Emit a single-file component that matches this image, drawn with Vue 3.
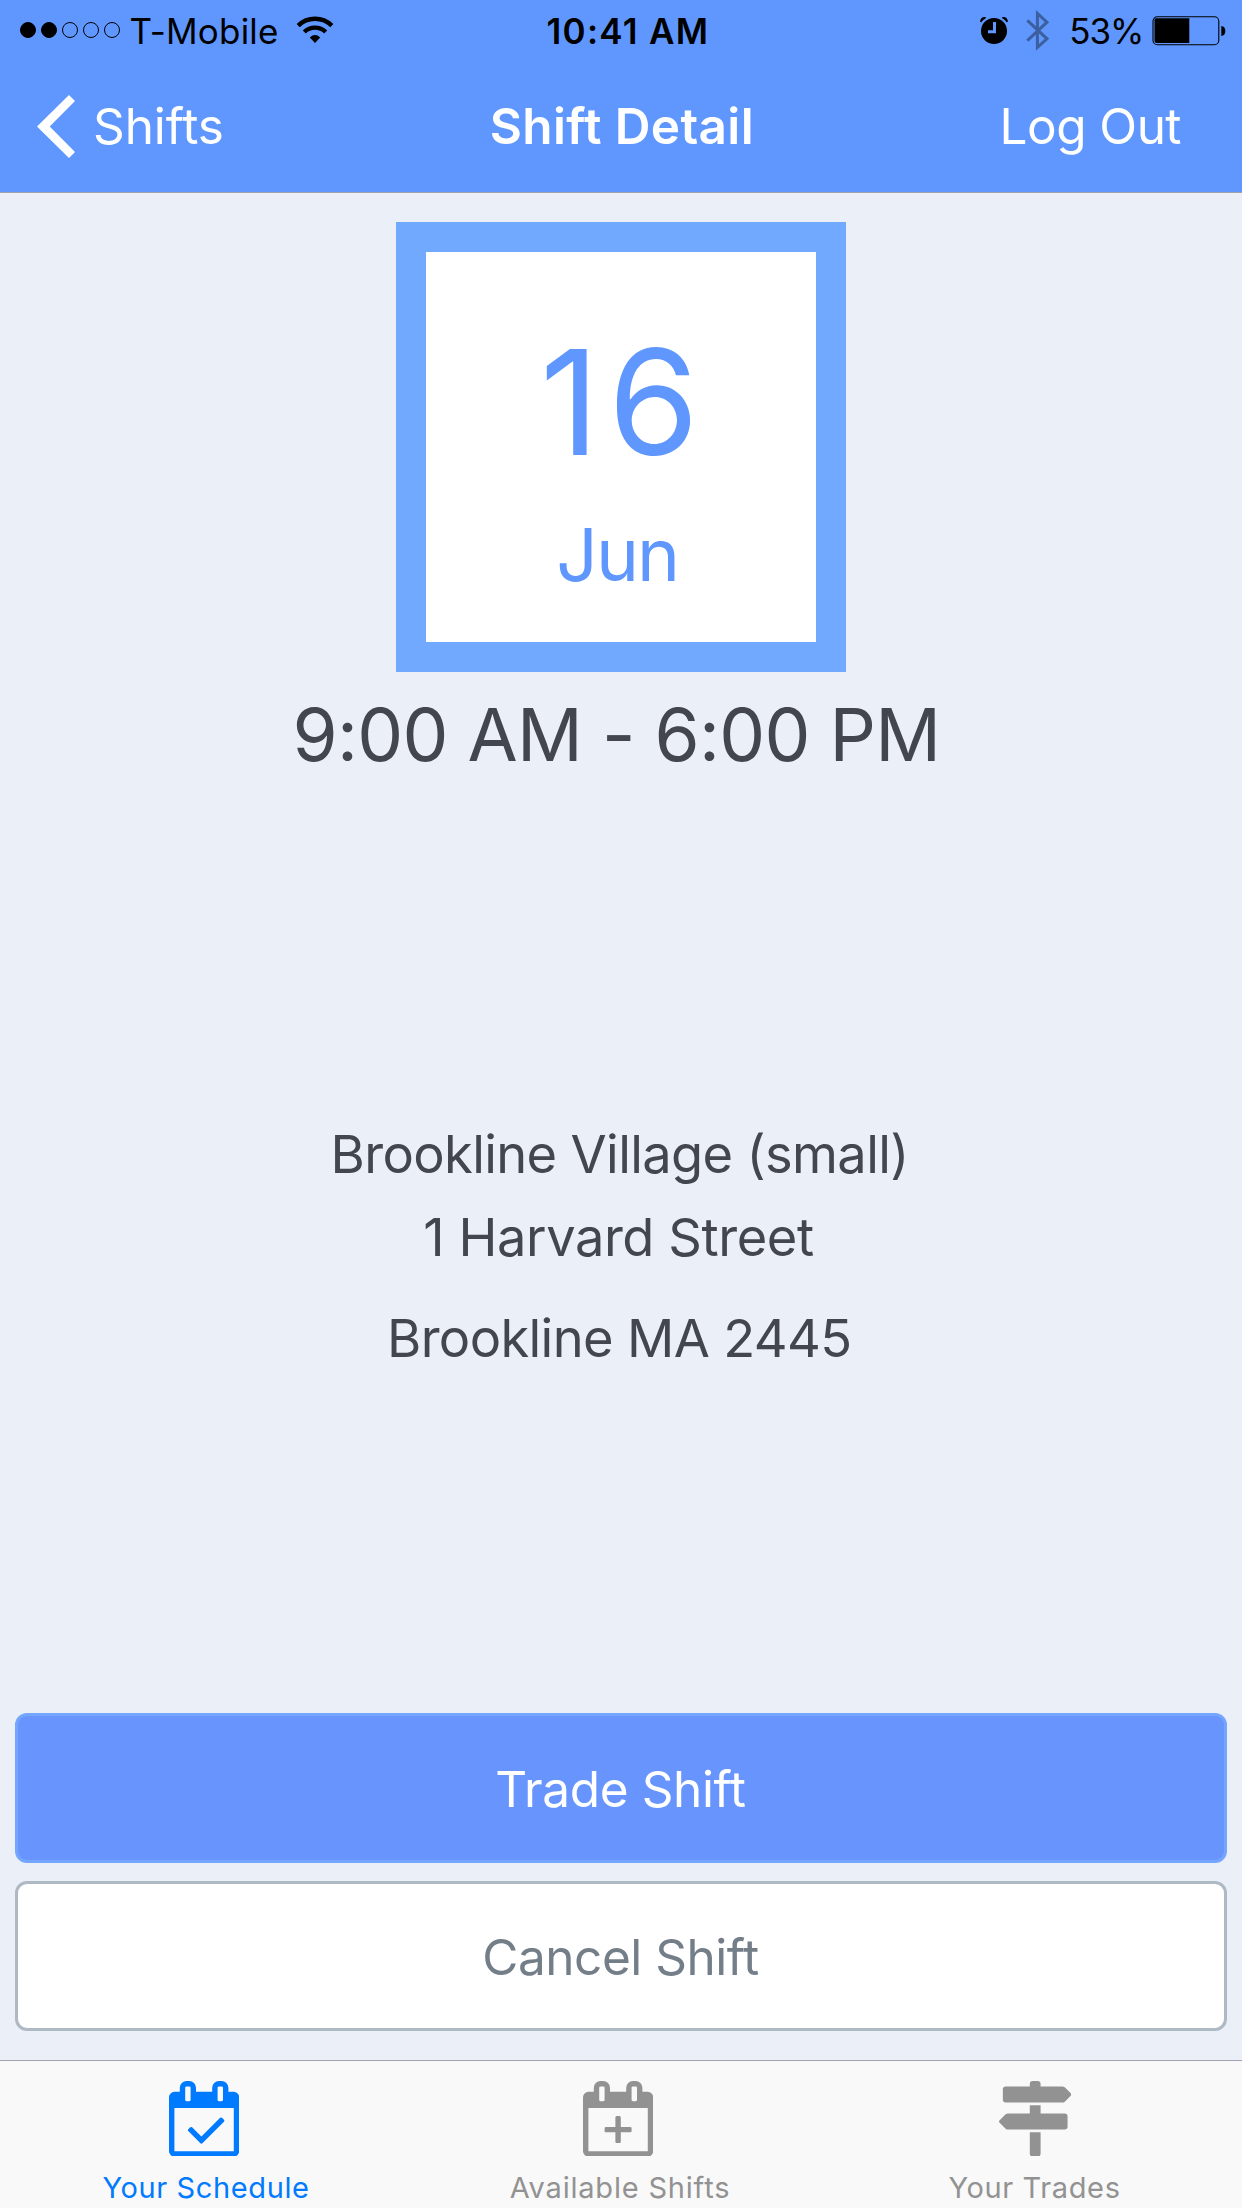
<script setup>
const signal = [true, true, false, false, false]
const calendar =
  'M128 1664h1408v-1024h-1408v1024zM512 448v-288q0-14-9-23t-23-9h-64q-14 0-23 9t-9 23v288q0 14 9 23t23 9h64q14 0 23-9t9-23zM1280 448v-288q0-14-9-23t-23-9h-64q-14 0-23 9t-9 23v288q0 14 9 23t23 9h64q14 0 23-9t9-23zM1664 384v1280q0 52-38 90t-90 38h-1408q-52 0-90-38t-38-90v-1280q0-52 38-90t90-38h128v-96q0-66 47-113t113-47h64q66 0 113 47t47 113v96h384v-96q0-66 47-113t113-47h64q66 0 113 47t47 113v96h128q52 0 90 38t38 90z'
const tabs = [
  {
    name: 'schedule',
    label: 'Your Schedule',
    active: true,
    box: '0 0 1664 1792',
    path: calendar + 'M1303 964l-512 512q-10 9-23 9t-23-9l-288-288q-9-10-9-23t9-22l46-46q9-9 22-9t23 9l220 220 444-444q10-9 23-9t22 9l46 46q9 9 9 22t-9 23z',
  },
  {
    name: 'available',
    label: 'Available Shifts',
    active: false,
    box: '0 0 1664 1792',
    path: calendar + 'M896 1088h224q14 0 23 9t9 23v64q0 14-9 23t-23 9h-224v224q0 14-9 23t-23 9h-64q-14 0-23-9t-9-23v-224h-224q-14 0-23-9t-9-23v-64q0-14 9-23t23-9h224v-224q0-14 9-23t23-9h64q14 0 23 9t9 23z',
  },
  {
    name: 'trades',
    label: 'Your Trades',
    active: false,
    box: '37 0 1718 1792',
    path: 'M1745 297q10 10 10 23t-10 23l-141 141q-28 28-68 28h-1344q-26 0-45-19t-19-45v-256q0-26 19-45t45-19h576v-64q0-26 19-45t45-19h128q26 0 45 19t19 45v64h512q40 0 68 28zM768 576h256v192h576q26 0 45 19t19 45v256q0 26-19 45t-45 19h-1344q-40 0-68-28l-141-141q-10-10-10-23t10-23l141-141q28-28 68-28h512zM768 1216h256v512q0 26-19 45t-45 19h-128q-26 0-45-19t-19-45z',
  },
]
</script>

<template>
  <div class="screen">
    <header class="header">
      <div class="status">
        <div class="status-left">
          <div class="dots">
            <i v-for="(on, n) in signal" :key="n" class="dot" :class="{ on }"></i>
          </div>
          <span class="carrier">T-Mobile</span>
          <svg class="wifi" viewBox="0 0 38 28">
            <path d="M2.2 9.6A24 24 0 0 1 35.8 9.6" fill="none" stroke="#000" stroke-width="4.4" />
            <path d="M8.3 16A15.3 15.3 0 0 1 29.7 16" fill="none" stroke="#000" stroke-width="4.4" />
            <path d="M19 27L13.8 21.4Q19 16.6 24.2 21.4Z" />
          </svg>
        </div>
        <span class="clock">10:41 AM</span>
        <div class="status-right">
          <svg class="alarm" viewBox="0 0 28 28">
            <circle cx="14" cy="15" r="13" />
            <path d="M0 5.2Q1 0.2 5.8 1L5.6 2.4Q3 3.6 1.2 6.4ZM28 5.2Q27 0.2 22.2 1L22.4 2.4Q25 3.6 26.8 6.4Z" />
            <path d="M14.5 6V15.8H8" fill="none" stroke="#5f97ff" stroke-width="3" />
          </svg>
          <svg class="bluetooth" viewBox="0 0 24 42">
            <path d="M1.3 10.3L21 28.8L11.4 37.4V3.4L21 12.2L1.3 30.7" fill="none" stroke="#3c609f" stroke-width="3" />
          </svg>
          <span class="percent">53%</span>
          <svg class="battery" viewBox="0 0 74 30">
            <rect x="1" y="0.7" width="65.8" height="28" rx="4.5" fill="none" stroke="#000" stroke-width="1.1" />
            <path d="M4.5 2.3H37.3V27H4.5Q2.5 27 2.5 25V4.3Q2.5 2.3 4.5 2.3Z" />
            <path d="M69.3 10Q73.3 10.5 73.3 15T69.3 20Z" />
          </svg>
        </div>
      </div>
      <nav class="nav">
        <a class="back">
          <svg class="chevron" viewBox="0 0 38 63"><path d="M32 0L38 6L12.7 31.5L38 57L32 63L0 31.5Z" fill="#fff" /></svg>
          <span>Shifts</span>
        </a>
        <h1 class="title">Shift Detail</h1>
        <a class="logout">Log Out</a>
      </nav>
    </header>

    <main class="content">
      <section class="date">
        <span class="day">16</span>
        <span class="month">Jun</span>
      </section>
      <p class="time">9:00 AM - 6:00 PM</p>
      <address class="address">
        <span class="place">Brookline Village (small)</span>
        <span class="street">1 Harvard Street</span>
        <span class="city">Brookline MA 2445</span>
      </address>
      <div class="actions">
        <button class="button primary">Trade Shift</button>
        <button class="button secondary">Cancel Shift</button>
      </div>
    </main>

    <footer class="tabs">
      <a v-for="tab in tabs" :key="tab.name" class="tab" :class="[tab.name, { active: tab.active }]">
        <svg class="tab-icon" :viewBox="tab.box"><path :d="tab.path" fill="currentColor" fill-rule="evenodd" /></svg>
        <span class="tab-label">{{ tab.label }}</span>
      </a>
    </footer>
  </div>
</template>

<style>
body {
  margin: 0;
}
</style>

<style scoped>
.screen {
  display: flex;
  flex-direction: column;
  width: 1242px;
  height: 2208px;
  overflow: hidden;
  background: #eaeff8;
  color: #43464e;
  font-family: Inter, "Liberation Sans", sans-serif;
  white-space: nowrap;
}
.header {
  box-sizing: border-box;
  height: 193px;
  flex: none;
  background: #5f97ff;
  border-bottom: 1px solid #a0a2ad;
}
.status,
.nav {
  display: grid;
  grid-template-columns: 1fr auto 1fr;
}
.status {
  height: 62px;
  line-height: 62px;
  font-size: 35px;
  color: #000;
}
.status-left,
.status-right {
  display: flex;
  align-items: flex-start;
}
.status-left {
  padding-left: 20px;
}
.status-right {
  justify-content: flex-end;
  padding-right: 16px;
}
.dots {
  display: flex;
  gap: 5px;
  margin-top: 22px;
}
.dot {
  box-sizing: border-box;
  width: 16px;
  height: 16px;
  border: 1px solid #000;
  border-radius: 50%;
}
.dot.on {
  background: #000;
}
.carrier {
  margin-left: 9.5px;
  letter-spacing: 0.2px;
}
.wifi {
  width: 38px;
  height: 28px;
  margin: 15.5px 0 0 17.8px;
}
.clock {
  padding-left: 13.7px;
  font-weight: 600;
  letter-spacing: 1.27px;
}
.alarm {
  width: 28px;
  height: 28px;
  margin: 16px 18px 0 0;
}
.bluetooth {
  width: 24px;
  height: 42px;
  margin: 10px 19.3px 0 0;
}
.percent {
  letter-spacing: -1.1px;
}
.battery {
  width: 74px;
  height: 30px;
  margin: 16px 0 0 8.7px;
}
.nav {
  height: 130px;
  line-height: 128px;
  font-size: 49.5px;
  color: #fff;
}
.back {
  display: flex;
  padding-left: 37px;
  letter-spacing: -0.1px;
}
.chevron {
  width: 38px;
  height: 63px;
  margin: 33px 18px 0 0;
}
.title {
  margin: 0;
  padding-left: 1.7px;
  font-size: inherit;
  font-weight: 600;
  letter-spacing: 0.37px;
}
.logout {
  justify-self: end;
  padding-right: 61px;
  letter-spacing: -0.55px;
}
.content {
  display: flex;
  flex: 1;
  flex-direction: column;
  align-items: center;
  padding-top: 29px;
}
.date {
  box-sizing: border-box;
  display: flex;
  flex: none;
  flex-direction: column;
  align-items: center;
  width: 450px;
  height: 450px;
  padding-top: 75px;
  border: 30px solid #71a9ff;
  background: #fff;
  color: #5f97ff;
}
.day {
  padding-left: 5.7px;
  font-size: 146px;
  line-height: 150px;
  letter-spacing: 9px;
}
.month {
  margin-top: 38px;
  padding-right: 7.6px;
  font-size: 72.8px;
  line-height: 80px;
  letter-spacing: -1.95px;
}
.time {
  margin: 18px 0 0;
  padding-right: 9.1px;
  font-size: 72.8px;
  line-height: 90px;
  letter-spacing: -0.69px;
}
.address {
  display: flex;
  flex-direction: column;
  align-items: center;
  margin-top: 342px;
  font-size: 52.4px;
  font-style: normal;
  line-height: 64px;
}
.place {
  padding-right: 2.7px;
  letter-spacing: -0.63px;
}
.street {
  margin-top: 19px;
  padding-right: 5px;
  letter-spacing: -0.42px;
}
.city {
  margin-top: 37px;
  padding-right: 3.5px;
  letter-spacing: -0.63px;
}
.actions {
  display: flex;
  flex-direction: column;
  gap: 18px;
  align-self: stretch;
  margin-top: auto;
  padding: 0 15px 29px;
}
.button {
  box-sizing: border-box;
  height: 150px;
  padding: 2px 0 0;
  border: 3px solid;
  border-radius: 12px;
  font: 49.5px / 142px Inter, "Liberation Sans", sans-serif;
}
.primary {
  padding-right: 1px;
  border-color: #74a5ff;
  background: #6895fd;
  color: #fff;
  letter-spacing: -0.38px;
}
.secondary {
  padding-right: 1px;
  border-color: #aeb9c4;
  background: #fff;
  color: #747e88;
  letter-spacing: -0.48px;
}
.tabs {
  box-sizing: border-box;
  display: grid;
  flex: none;
  grid-template-columns: repeat(3, 1fr);
  height: 148px;
  border-top: 1px solid #a0a2ad;
  background: #f9f9f9;
  color: #929292;
}
.tab {
  display: flex;
  flex-direction: column;
  align-items: center;
  padding-top: 19.8px;
}
.tab.active {
  color: #007aff;
}
.tab-icon {
  width: 70.2px;
  height: 75.6px;
  margin-right: 6px;
}
.trades .tab-icon {
  width: 72.4px;
  margin-right: 0;
}
.tab-label {
  margin-top: 13.6px;
  padding-right: 2px;
  font-size: 29px;
  line-height: 36px;
  letter-spacing: 0.62px;
}
.available .tab-label {
  letter-spacing: 0.8px;
}
.trades .tab-label {
  padding-right: 1px;
}
</style>
